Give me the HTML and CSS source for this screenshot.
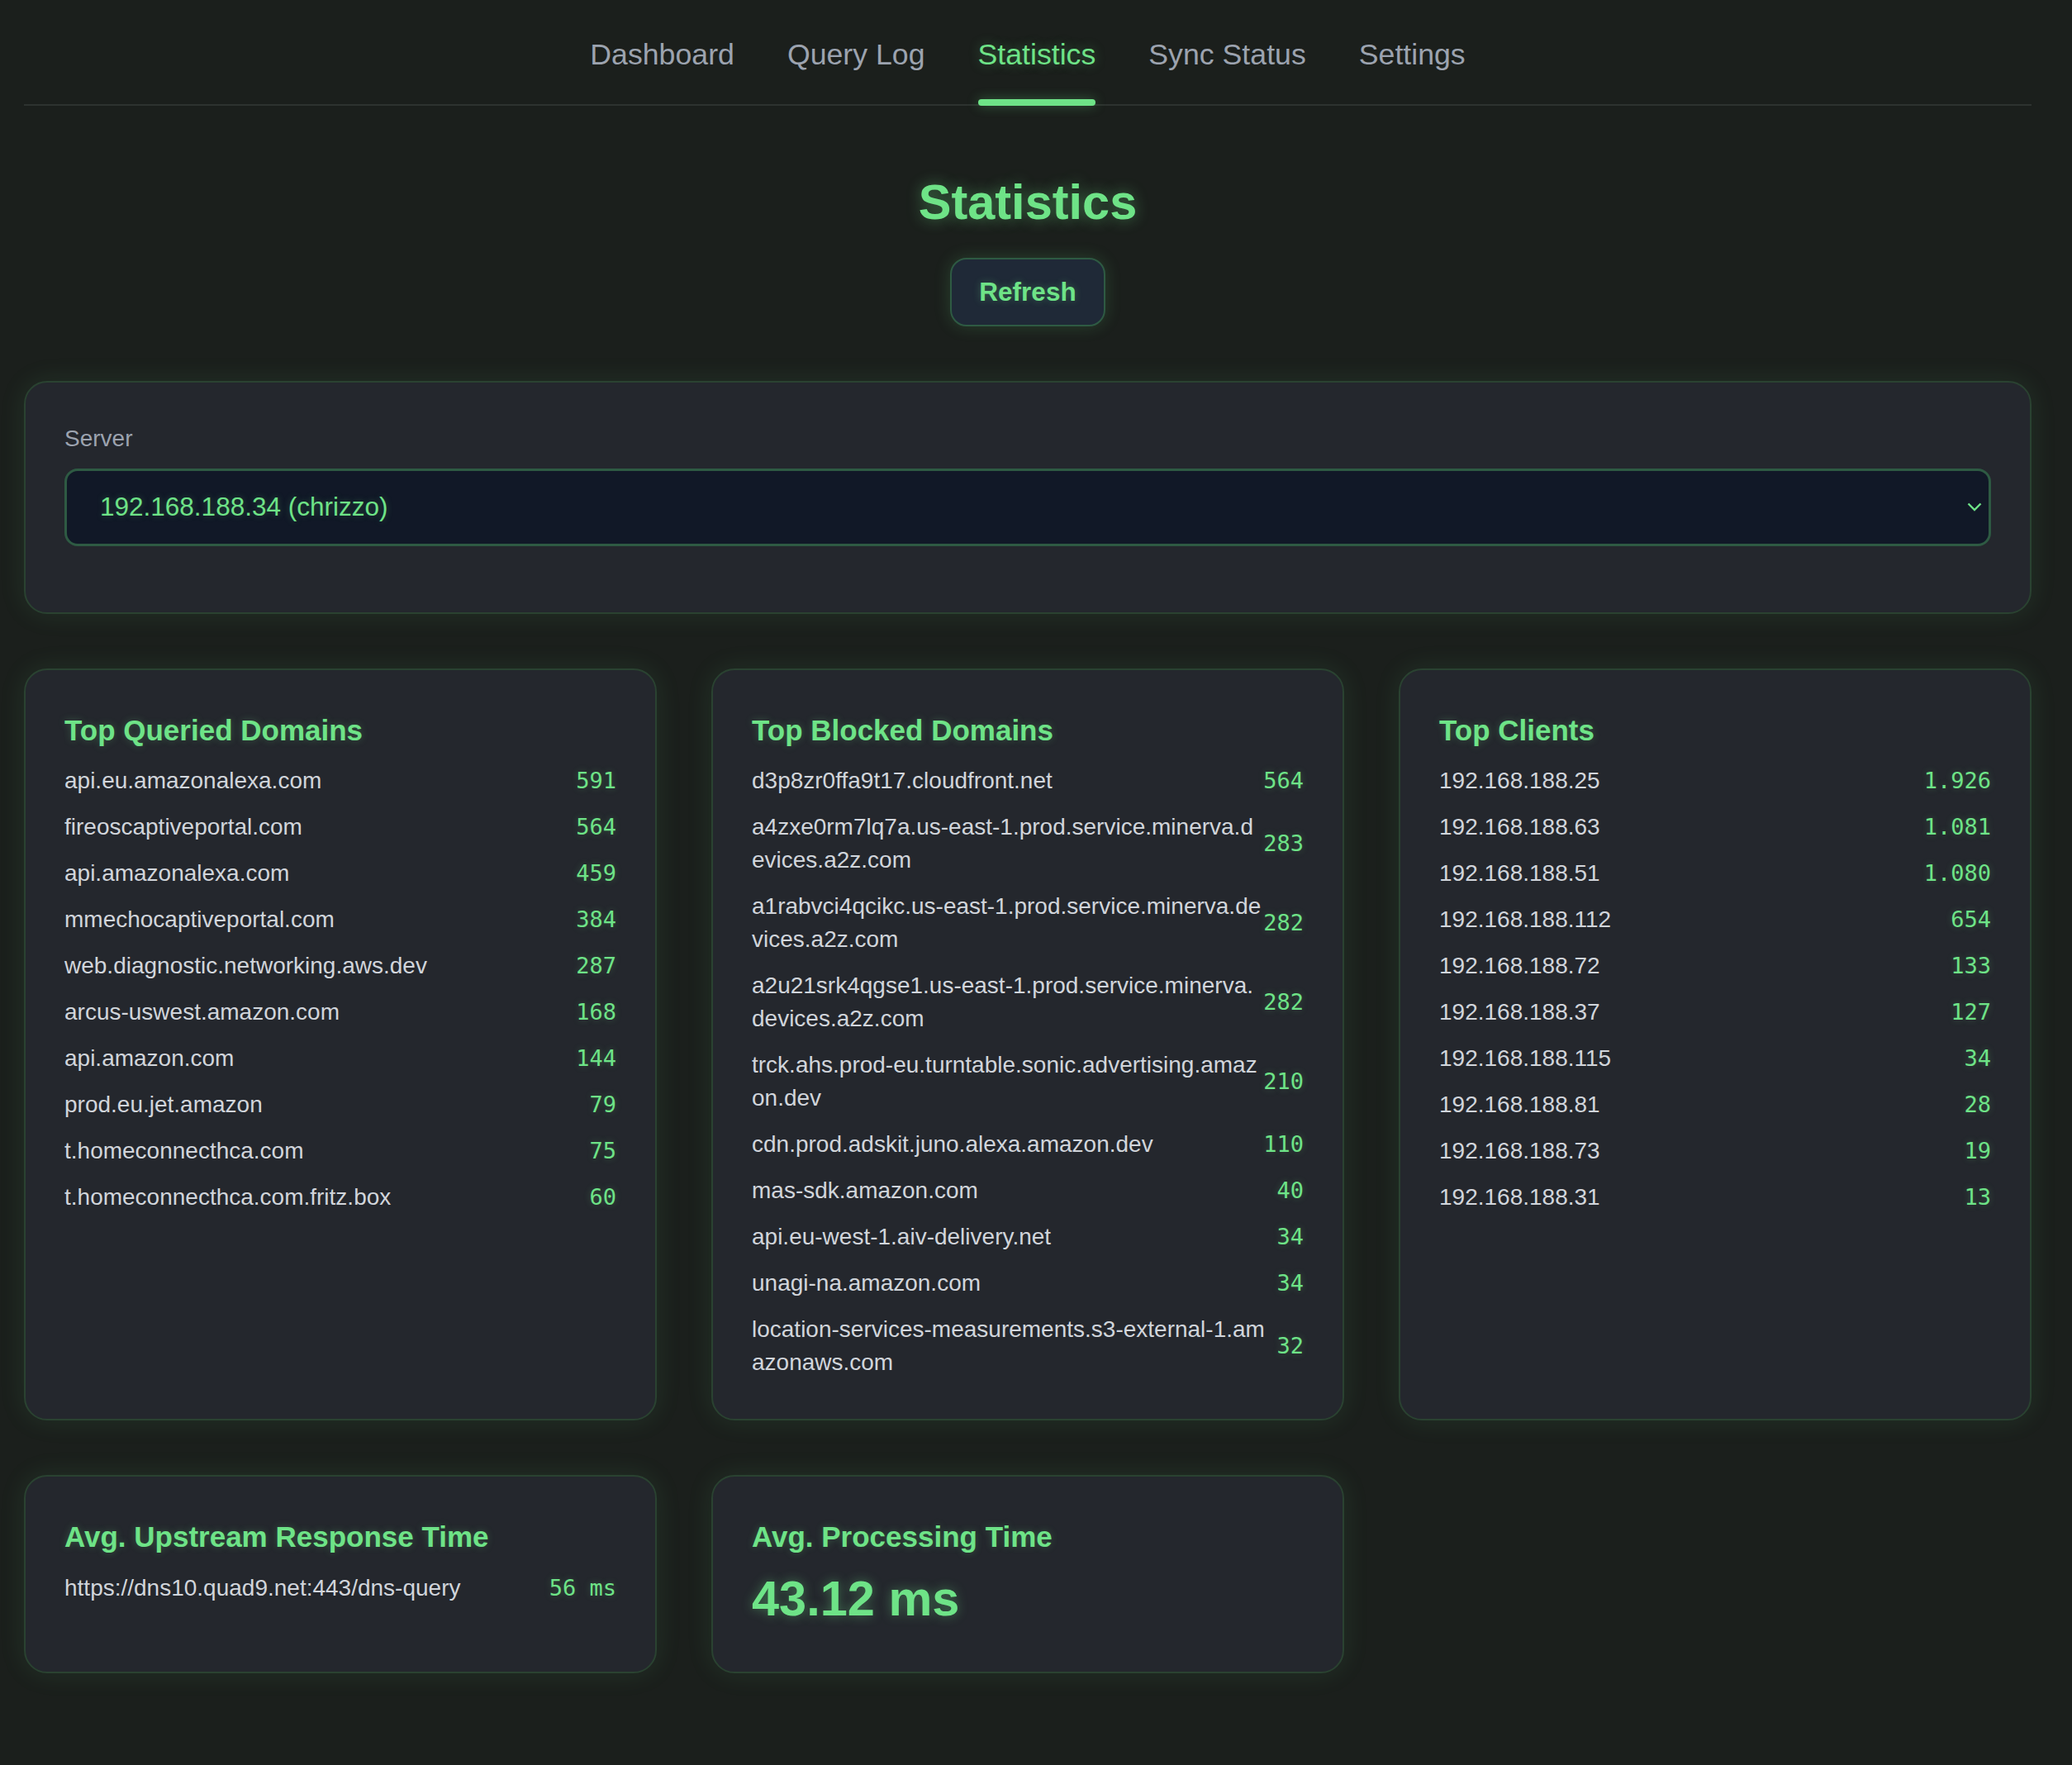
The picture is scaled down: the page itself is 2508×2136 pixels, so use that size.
FILE: index.html
```html
<html>

<head>
    <meta charset="utf-8">
    <title>Statistics</title>
    <link rel="stylesheet" href="styles.css">
</head>

<body>
    <nav class="tabs">
        <a href="#">Dashboard</a>
        <a href="#">Query Log</a>
        <a href="#" class="active">Statistics</a>
        <a href="#">Sync Status</a>
        <a href="#">Settings</a>
    </nav>

    <main>
        <header class="page-head">
            <h1>Statistics</h1>
            <button class="btn">Refresh</button>
        </header>

        <section class="card server-card">
            <div class="field">
                <label>Server</label>
                <div class="select">
                    <span>192.168.188.34 (chrizzo)</span>
                    <svg width="18" height="11" viewBox="0 0 18 11"><path d="M1.5 1.5 L9 9 L16.5 1.5" fill="none" stroke="#6ee387" stroke-width="2.4"/></svg>
                </div>
            </div>
        </section>

        <div class="stats-grid">
            <section class="card">
                <h2>Top Queried Domains</h2>
                <ul class="stat-list">
                    <li><span class="name">api.eu.amazonalexa.com</span><span class="count">591</span></li>
                    <li><span class="name">fireoscaptiveportal.com</span><span class="count">564</span></li>
                    <li><span class="name">api.amazonalexa.com</span><span class="count">459</span></li>
                    <li><span class="name">mmechocaptiveportal.com</span><span class="count">384</span></li>
                    <li><span class="name">web.diagnostic.networking.aws.dev</span><span class="count">287</span></li>
                    <li><span class="name">arcus-uswest.amazon.com</span><span class="count">168</span></li>
                    <li><span class="name">api.amazon.com</span><span class="count">144</span></li>
                    <li><span class="name">prod.eu.jet.amazon</span><span class="count">79</span></li>
                    <li><span class="name">t.homeconnecthca.com</span><span class="count">75</span></li>
                    <li><span class="name">t.homeconnecthca.com.fritz.box</span><span class="count">60</span></li>
                </ul>
            </section>

            <section class="card">
                <h2>Top Blocked Domains</h2>
                <ul class="stat-list">
                    <li><span class="name">d3p8zr0ffa9t17.cloudfront.net</span><span class="count">564</span></li>
                    <li><span class="name">a4zxe0rm7lq7a.us-east-1.prod.service.minerva.devices.a2z.com</span><span class="count">283</span></li>
                    <li><span class="name">a1rabvci4qcikc.us-east-1.prod.service.minerva.devices.a2z.com</span><span class="count">282</span></li>
                    <li><span class="name">a2u21srk4qgse1.us-east-1.prod.service.minerva.devices.a2z.com</span><span class="count">282</span></li>
                    <li><span class="name">trck.ahs.prod-eu.turntable.sonic.advertising.amazon.dev</span><span class="count">210</span></li>
                    <li><span class="name">cdn.prod.adskit.juno.alexa.amazon.dev</span><span class="count">110</span></li>
                    <li><span class="name">mas-sdk.amazon.com</span><span class="count">40</span></li>
                    <li><span class="name">api.eu-west-1.aiv-delivery.net</span><span class="count">34</span></li>
                    <li><span class="name">unagi-na.amazon.com</span><span class="count">34</span></li>
                    <li><span class="name">location-services-measurements.s3-external-1.amazonaws.com</span><span class="count">32</span></li>
                </ul>
            </section>

            <section class="card">
                <h2>Top Clients</h2>
                <ul class="stat-list">
                    <li><span class="name">192.168.188.25</span><span class="count">1.926</span></li>
                    <li><span class="name">192.168.188.63</span><span class="count">1.081</span></li>
                    <li><span class="name">192.168.188.51</span><span class="count">1.080</span></li>
                    <li><span class="name">192.168.188.112</span><span class="count">654</span></li>
                    <li><span class="name">192.168.188.72</span><span class="count">133</span></li>
                    <li><span class="name">192.168.188.37</span><span class="count">127</span></li>
                    <li><span class="name">192.168.188.115</span><span class="count">34</span></li>
                    <li><span class="name">192.168.188.81</span><span class="count">28</span></li>
                    <li><span class="name">192.168.188.73</span><span class="count">19</span></li>
                    <li><span class="name">192.168.188.31</span><span class="count">13</span></li>
                </ul>
            </section>
        </div>

        <div class="stats-grid bottom-grid">
            <section class="card">
                <h2>Avg. Upstream Response Time</h2>
                <ul class="stat-list">
                    <li><span class="name">https://dns10.quad9.net:443/dns-query</span><span class="count">56 ms</span></li>
                </ul>
            </section>

            <section class="card">
                <h2>Avg. Processing Time</h2>
                <div class="big-value">43.12 ms</div>
            </section>
        </div>
    </main>
</body>

</html>
```

FILE: styles.css
```css
* {
    box-sizing: border-box;
}

body {
    margin: 0;
    padding: 0 49px 60px 29px;
    background: #1b1f1c;
    color: #d1d5db;
    font-family: "Liberation Sans", Arial, sans-serif;
    font-size: 28px;
    line-height: 1.5;
}

/* top navigation */
.tabs {
    display: flex;
    justify-content: center;
    gap: 64px;
    padding-top: 40px;
    border-bottom: 2px solid #2d322f;
}

.tabs a {
    position: relative;
    color: #9ca3af;
    text-decoration: none;
    font-size: 35.7px;
    line-height: 52.5px;
    padding-bottom: 33.5px;
}

.tabs a.active {
    color: #6ee387;
    text-shadow: 0 0 14px rgba(110, 227, 135, 0.35);
}

.tabs a.active::after {
    content: "";
    position: absolute;
    left: 0;
    right: 0;
    bottom: -2px;
    height: 8px;
    border-radius: 4px;
    background: #6ee387;
    box-shadow: 0 0 14px rgba(110, 227, 135, 0.35);
}

/* header */
.page-head {
    display: flex;
    flex-direction: column;
    align-items: center;
    padding-top: 81px;
    margin-bottom: 66px;
}

.page-head h1 {
    margin: 0 0 32px;
    font-size: 59.5px;
    line-height: 71px;
    color: #6ee387;
    text-shadow: 0 0 18px rgba(110, 227, 135, 0.45);
}

.btn {
    font-family: inherit;
    font-size: 31.5px;
    font-weight: bold;
    line-height: 1.5;
    padding: 16px 33px;
    color: #6ee387;
    background: #1f2937;
    border: 2px solid #2e5a43;
    border-radius: 20px;
    box-shadow: 0 0 20px rgba(110, 227, 135, 0.18);
    text-shadow: 0 0 10px rgba(110, 227, 135, 0.3);
}

/* cards */
.card {
    background: #24272d;
    border: 2px solid #2a4231;
    border-radius: 28px;
    padding: 47px;
    box-shadow: 0 0 32px rgba(110, 227, 135, 0.1);
}

.server-card {
    margin-bottom: 66px;
}

.field {
    margin-bottom: 33px;
}

.field label {
    display: block;
    color: #9ca3af;
    line-height: 42px;
    margin-bottom: 15px;
}

.select {
    display: flex;
    justify-content: space-between;
    align-items: center;
    background: #111827;
    border: 3px solid #2e5a43;
    border-radius: 16px;
    padding: 20px 8px 20px 40px;
    color: #6ee387;
    font-size: 31.5px;
    line-height: 1.5;
    text-shadow: 0 0 8px rgba(110, 227, 135, 0.25);
}

.stats-grid {
    display: grid;
    grid-template-columns: repeat(3, 1fr);
    gap: 66px;
}

.bottom-grid {
    margin-top: 66px;
}

.card h2 {
    margin: 0 0 7px;
    font-size: 35px;
    line-height: 52.5px;
    color: #6ee387;
    text-shadow: 0 0 10px rgba(110, 227, 135, 0.25);
}

.stat-list {
    list-style: none;
    margin: 0;
    padding: 0;
}

.stat-list li {
    display: flex;
    justify-content: space-between;
    align-items: center;
    padding: 8px 0;
}

.stat-list li:last-child {
    padding-bottom: 1px;
}

.stat-list .name {
    line-height: 40px;
    word-break: break-all;
}

.stat-list .count {
    flex-shrink: 0;
    font-family: "DejaVu Sans Mono", "Liberation Mono", monospace;
    font-size: 27px;
    line-height: 40px;
    color: #6ee387;
    text-shadow: 0 0 8px rgba(110, 227, 135, 0.25);
}

.big-value {
    font-size: 59.5px;
    font-weight: bold;
    line-height: 82px;
    color: #6ee387;
    text-shadow: 0 0 14px rgba(110, 227, 135, 0.4);
}
```
